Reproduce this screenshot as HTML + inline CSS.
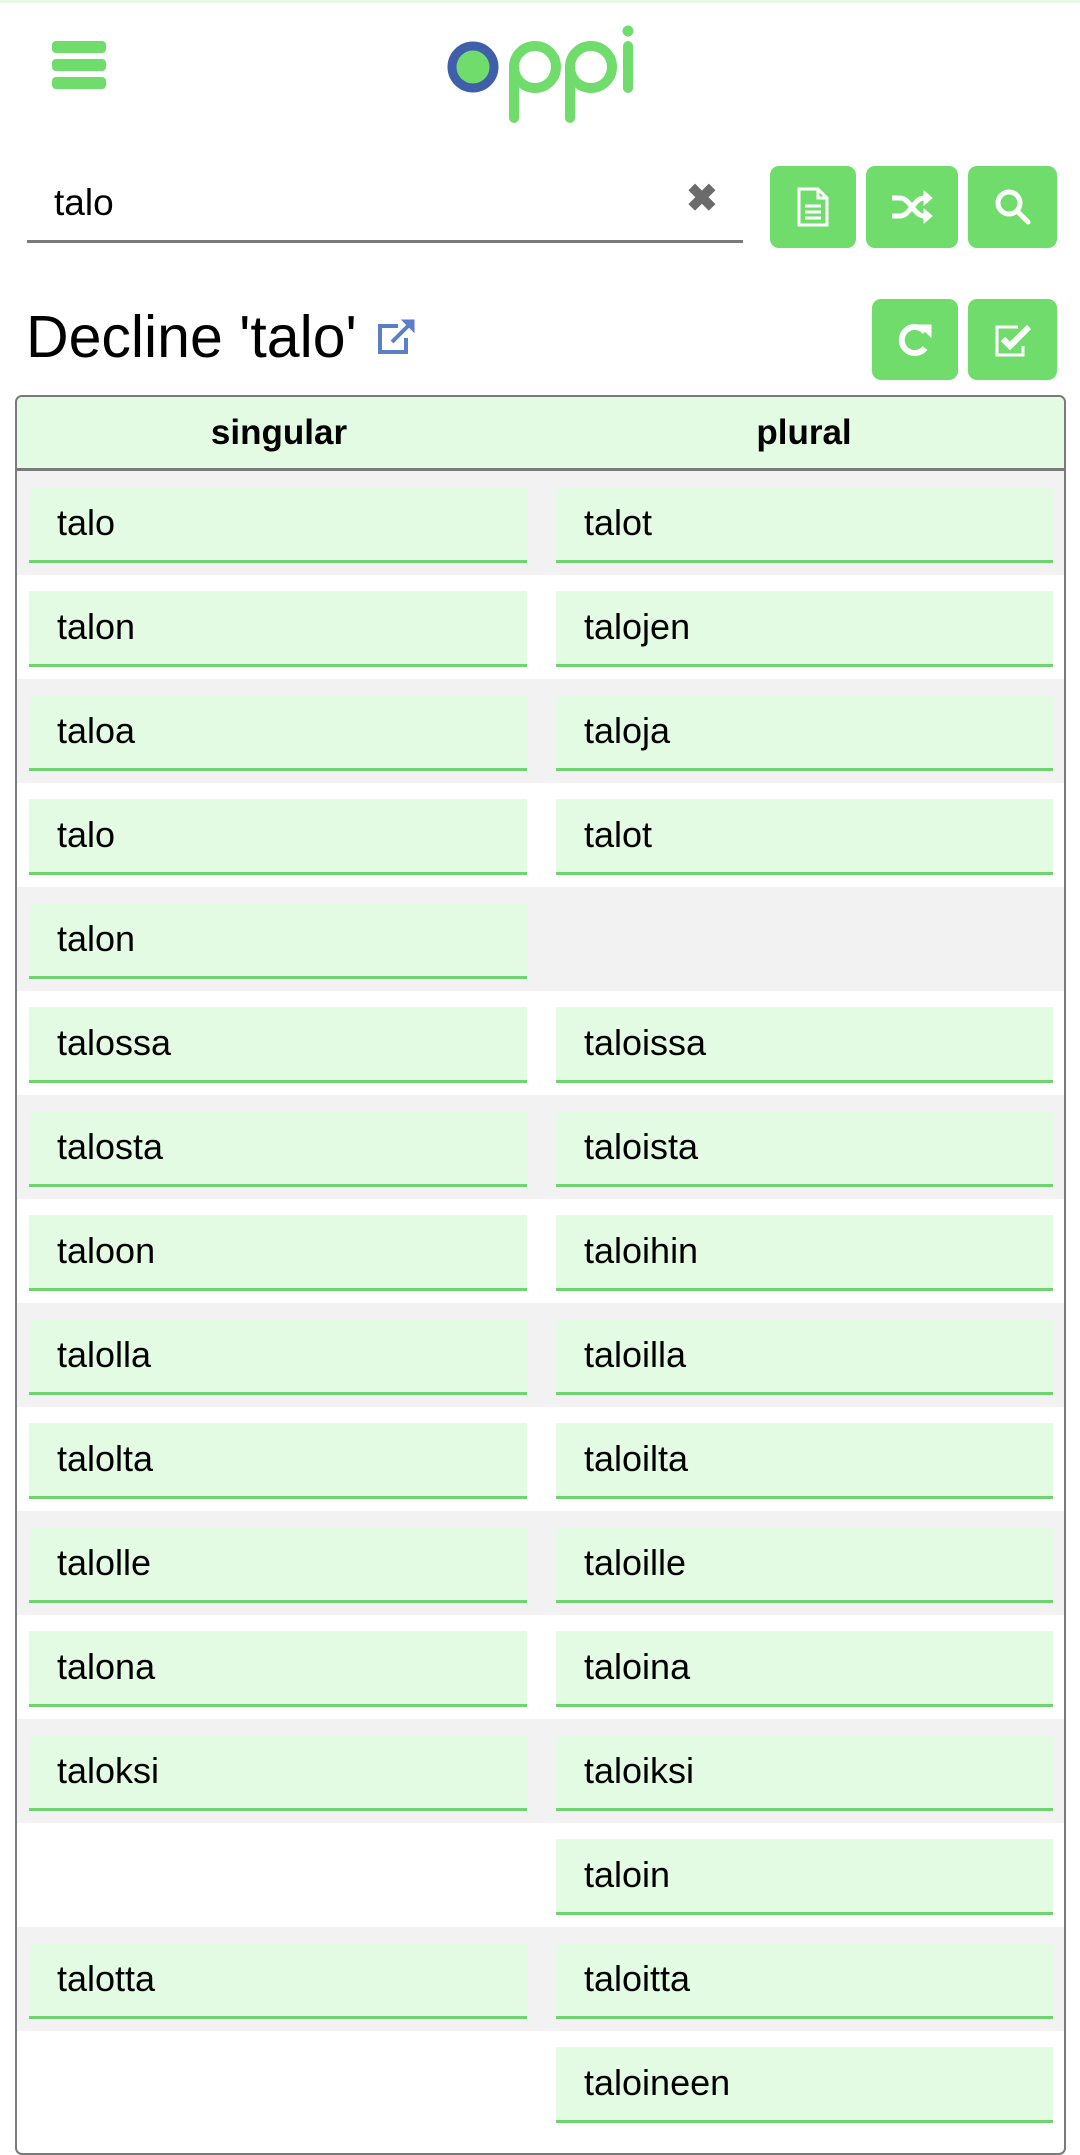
<!DOCTYPE html>
<html><head><meta charset="utf-8"><style>
*{box-sizing:border-box;margin:0;padding:0}
body{width:1080px;height:2137px;overflow:hidden;background:#fff;font-family:"Liberation Sans",Arial,sans-serif;position:relative;color:#000}
.topline{position:absolute;left:0;top:0;width:1080px;height:3px;background:#e6fae6}
.ham{position:absolute;left:52px;width:54px;height:12px;border-radius:4px;background:#70dc6c}
.btn{position:absolute;background:#70dc6c;border-radius:9px;display:flex;align-items:center;justify-content:center}
.abs{position:absolute}
.tbl{position:absolute;left:15px;top:395px;width:1051px;height:1760px;border:2px solid #7a7a7a;border-radius:7px;overflow:hidden}
.hdr{height:74px;background:#e3fae3;border-bottom:3px solid #7a7a7a;position:relative;font-weight:bold;font-size:35px}
.hdr span{position:absolute;top:16px;transform:translateX(-50%)}
.row{height:104px;position:relative}
.row.g{background:#f2f2f2}
.cell{position:absolute;top:16px;height:76px;background:#e3fae3;border-bottom:3px solid #6fd46f;font-size:36px;padding-left:28px;line-height:72px}
.c1{left:12px;width:498px}
.c2{left:539px;width:497px}
</style></head><body>
<div class="topline"></div>
<div class="ham" style="top:41px"></div>
<div class="ham" style="top:59px"></div>
<div class="ham" style="top:77px"></div>
<svg class="abs" style="left:0;top:0" width="700" height="130" viewBox="0 0 700 130">
<circle cx="473" cy="67" r="21" fill="#70dc6c" stroke="#3f5fab" stroke-width="9"/>
<g fill="none" stroke="#70dc6c" stroke-width="10" stroke-linecap="round">
<circle cx="535" cy="67" r="21"/>
<path d="M514 67 V118"/>
<circle cx="591" cy="67" r="21"/>
<path d="M570 67 V118"/>
<path d="M628 46 V88"/>
</g>
<circle cx="628" cy="31" r="5.5" fill="#70dc6c"/>
</svg>
<div class="abs" style="left:54px;top:182px;font-size:37px">talo</div>
<div class="abs" style="left:686px;top:176px;font-size:38px;color:#6b6b6b;font-weight:bold">✖</div>
<div class="abs" style="left:27px;top:240px;width:716px;height:3px;background:#7a7a7a"></div>
<div class="btn" style="left:770px;top:166px;width:86px;height:82px">
<svg width="34" height="40" viewBox="0 0 34 40" fill="none" stroke="#fff" stroke-width="3"><path d="M3 2h19l9 9v27H3z M22 2v9h9 M9 19h16 M9 25h16 M9 31h16"/></svg></div>
<div class="btn" style="left:866px;top:166px;width:92px;height:82px">
<svg width="44" height="36" viewBox="0 0 44 36" fill="none" stroke="#fff" stroke-width="5"><path d="M2 9h8c10 0 14 18 24 18h2 M2 27h8c10 0 14-18 24-18h2"/><path d="M34 2l8 7-8 7z M34 20l8 7-8 7z" fill="#fff" stroke-width="1"/></svg></div>
<div class="btn" style="left:968px;top:166px;width:89px;height:82px">
<svg width="38" height="38" viewBox="0 0 38 38" fill="none" stroke="#fff" stroke-width="5"><circle cx="15" cy="15" r="11"/><path d="M23 23l11 11" stroke-linecap="round"/></svg></div>
<div class="abs" style="left:26px;top:303px;font-size:59px;line-height:68px">Decline 'talo'</div>
<svg class="abs" style="left:376px;top:318px" width="42" height="38" viewBox="0 0 42 38" fill="none" stroke="#5b7ec8" stroke-width="4"><path d="M22 8H4v26h26V20"/><path d="M16 24L36 4"/><path d="M26 2h12v12z" fill="#5b7ec8" stroke-width="1"/></svg>
<div class="btn" style="left:872px;top:299px;width:86px;height:81px">
<svg width="36" height="38" viewBox="0 0 36 38" fill="none" stroke="#fff" stroke-width="6"><path d="M28 27a13 13 0 1 1 0-16"/><path d="M22 4h12v12z" fill="#fff" stroke-width="1"/></svg></div>
<div class="btn" style="left:968px;top:299px;width:89px;height:81px">
<svg width="40" height="38" viewBox="0 0 40 38" fill="none" stroke="#fff"><path d="M25 6H4v28h26v-9" stroke-width="3"/><path d="M10 18l7 7L36 6" stroke-width="6"/></svg></div>
<div class="tbl">
<div class="hdr"><span style="left:262px">singular</span><span style="left:787px">plural</span></div>
<div class="row g"><div class="cell c1">talo</div><div class="cell c2">talot</div></div>
<div class="row"><div class="cell c1">talon</div><div class="cell c2">talojen</div></div>
<div class="row g"><div class="cell c1">taloa</div><div class="cell c2">taloja</div></div>
<div class="row"><div class="cell c1">talo</div><div class="cell c2">talot</div></div>
<div class="row g"><div class="cell c1">talon</div></div>
<div class="row"><div class="cell c1">talossa</div><div class="cell c2">taloissa</div></div>
<div class="row g"><div class="cell c1">talosta</div><div class="cell c2">taloista</div></div>
<div class="row"><div class="cell c1">taloon</div><div class="cell c2">taloihin</div></div>
<div class="row g"><div class="cell c1">talolla</div><div class="cell c2">taloilla</div></div>
<div class="row"><div class="cell c1">talolta</div><div class="cell c2">taloilta</div></div>
<div class="row g"><div class="cell c1">talolle</div><div class="cell c2">taloille</div></div>
<div class="row"><div class="cell c1">talona</div><div class="cell c2">taloina</div></div>
<div class="row g"><div class="cell c1">taloksi</div><div class="cell c2">taloiksi</div></div>
<div class="row"><div class="cell c2">taloin</div></div>
<div class="row g"><div class="cell c1">talotta</div><div class="cell c2">taloitta</div></div>
<div class="row"><div class="cell c2">taloineen</div></div>
</div>
</body></html>
